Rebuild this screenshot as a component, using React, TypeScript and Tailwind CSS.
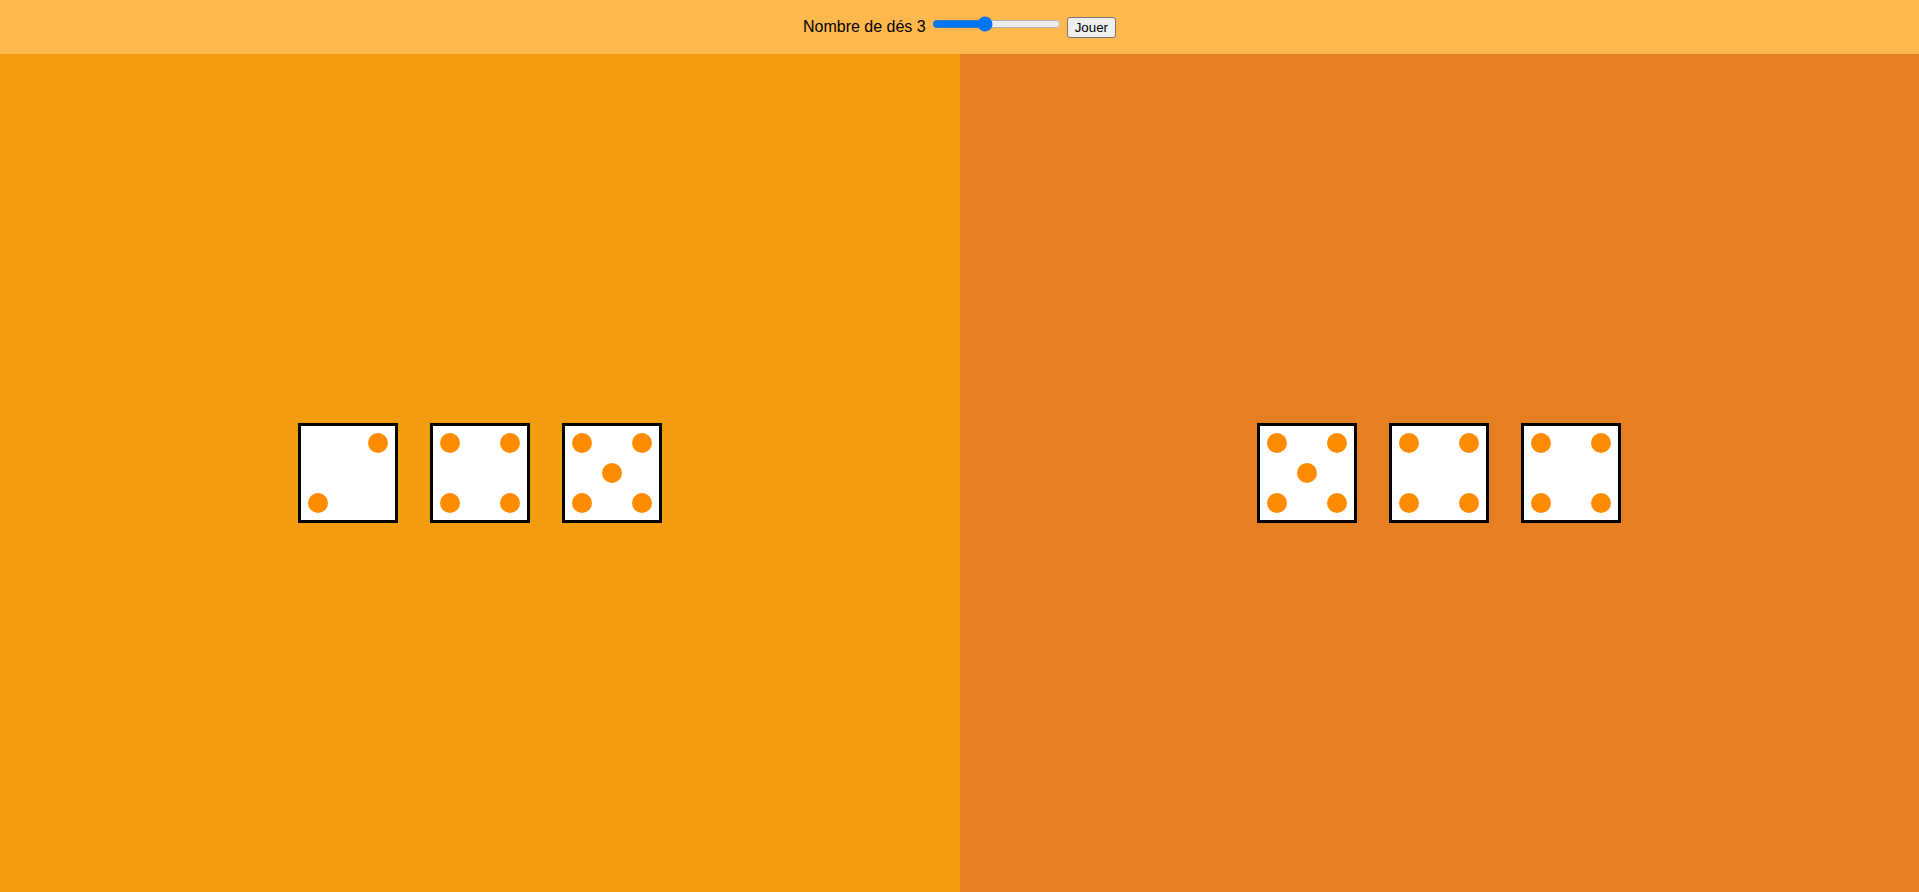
import React, { useState } from 'react';

type Pos = 'tl' | 'tr' | 'ml' | 'mm' | 'mr' | 'bl' | 'br';

const posClass: Record<Pos, string> = {
  tl: 'col-start-1 row-start-1 justify-self-start self-start',
  tr: 'col-start-3 row-start-1 justify-self-end self-start',
  ml: 'col-start-1 row-start-2 justify-self-start self-center',
  mm: 'col-start-2 row-start-2 justify-self-center self-center',
  mr: 'col-start-3 row-start-2 justify-self-end self-center',
  bl: 'col-start-1 row-start-3 justify-self-start self-end',
  br: 'col-start-3 row-start-3 justify-self-end self-end',
};

const faces: Record<number, Pos[]> = {
  1: ['mm'],
  2: ['tr', 'bl'],
  3: ['tr', 'mm', 'bl'],
  4: ['tl', 'tr', 'bl', 'br'],
  5: ['tl', 'tr', 'mm', 'bl', 'br'],
  6: ['tl', 'tr', 'ml', 'mr', 'bl', 'br'],
};

const Die: React.FC<{ value: number }> = ({ value }) => (
  <div className="w-[100px] h-[100px] border-[3px] border-black bg-white p-[7px] grid grid-cols-3 grid-rows-3">
    {faces[value].map((p) => (
      <span key={p} className={`w-5 h-5 rounded-full bg-[#ff8c00] ${posClass[p]}`} />
    ))}
  </div>
);

const Player: React.FC<{ dice: number[]; bg: string }> = ({ dice, bg }) => (
  <div className={`flex-1 flex items-center justify-center gap-8 ${bg}`}>
    {dice.map((d, i) => (
      <Die key={i} value={d} />
    ))}
  </div>
);

export default function App() {
  const [count, setCount] = useState(3);

  return (
    <div className="h-screen flex flex-col font-['Liberation_Sans',Arial,sans-serif] text-black">
      <div className="h-[54px] shrink-0 bg-[#ffb84d] flex items-center justify-center gap-[4px] text-base leading-[normal]">
        <span>Nombre de dés {count}</span>
        <input
          type="range"
          min={1}
          max={6}
          value={count}
          onChange={(e) => setCount(Number(e.target.value))}
          className="w-[129px] mx-[2px] mb-[6px]"
        />
        <button className="bg-[#efefef] border border-[#767676] rounded-[3px] px-[7px] py-[2px] text-[13.33px] leading-[normal]">
          Jouer
        </button>
      </div>
      <div className="flex-1 flex">
        <Player dice={[2, 4, 5]} bg="bg-[#f39c12]" />
        <Player dice={[5, 4, 4]} bg="bg-[#e67e22]" />
      </div>
    </div>
  );
}
